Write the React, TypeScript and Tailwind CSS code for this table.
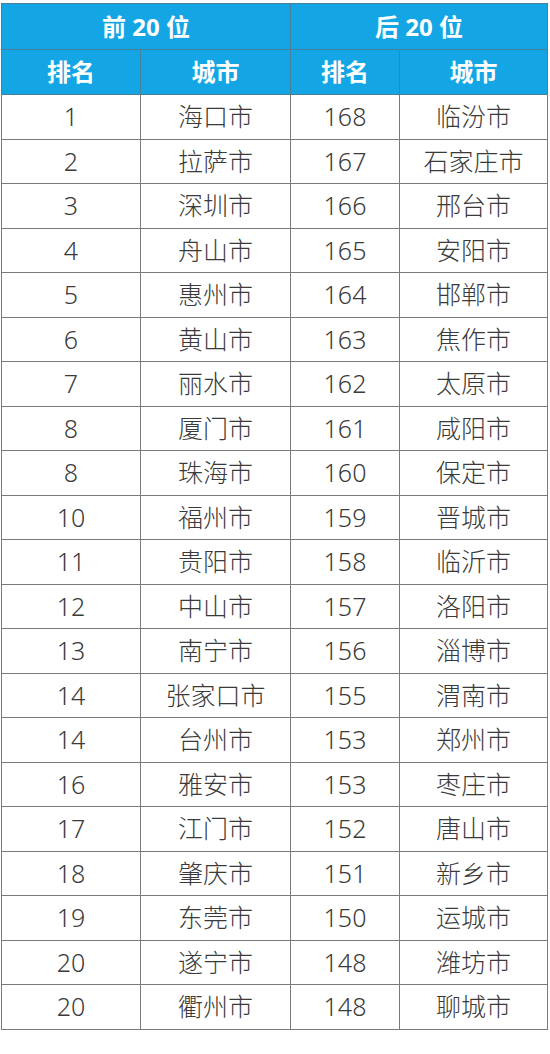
const rows: [string, string, string, string][] = [
  ["1", "海口市", "168", "临汾市"],
  ["2", "拉萨市", "167", "石家庄市"],
  ["3", "深圳市", "166", "邢台市"],
  ["4", "舟山市", "165", "安阳市"],
  ["5", "惠州市", "164", "邯郸市"],
  ["6", "黄山市", "163", "焦作市"],
  ["7", "丽水市", "162", "太原市"],
  ["8", "厦门市", "161", "咸阳市"],
  ["8", "珠海市", "160", "保定市"],
  ["10", "福州市", "159", "晋城市"],
  ["11", "贵阳市", "158", "临沂市"],
  ["12", "中山市", "157", "洛阳市"],
  ["13", "南宁市", "156", "淄博市"],
  ["14", "张家口市", "155", "渭南市"],
  ["14", "台州市", "153", "郑州市"],
  ["16", "雅安市", "153", "枣庄市"],
  ["17", "江门市", "152", "唐山市"],
  ["18", "肇庆市", "151", "新乡市"],
  ["19", "东莞市", "150", "运城市"],
  ["20", "遂宁市", "148", "潍坊市"],
  ["20", "衢州市", "148", "聊城市"],
];

export default function App() {
  return (
    <div className="w-[550px] h-[1054px] bg-white pt-[3px] pl-[1px] font-['Noto_Sans','Noto_Sans_CJK_SC',sans-serif]">
      <table className="w-[546px] border-collapse table-fixed text-[25px] text-center">
        <colgroup>
          <col className="w-[139px]" />
          <col className="w-[150px]" />
          <col className="w-[109px]" />
          <col className="w-[148px]" />
        </colgroup>
        <thead className="bg-[#14a6e4] text-white font-bold">
          <tr className="h-[46px]">
            <th colSpan={2} className="border border-[#4a7f9c] text-[24px]">前 20 位</th>
            <th colSpan={2} className="border border-[#4a7f9c] text-[24px]">后 20 位</th>
          </tr>
          <tr className="h-[45px]">
            <th className="border border-[#4a7f9c] text-[24px]">排名</th>
            <th className="border border-[#4a7f9c] text-[24px]">城市</th>
            <th className="border border-[#4a7f9c] text-[24px]">排名</th>
            <th className="border border-[#4a7f9c] text-[24px]">城市</th>
          </tr>
        </thead>
        <tbody className="text-[#3a3a3a] font-light">
          {rows.map((r, i) => (
            <tr key={i} className="h-[44.5px]">
              {r.map((c, j) => (
                <td key={j} className="border border-[#7a7a7a] leading-none">
                  {c}
                </td>
              ))}
            </tr>
          ))}
        </tbody>
      </table>
    </div>
  );
}
